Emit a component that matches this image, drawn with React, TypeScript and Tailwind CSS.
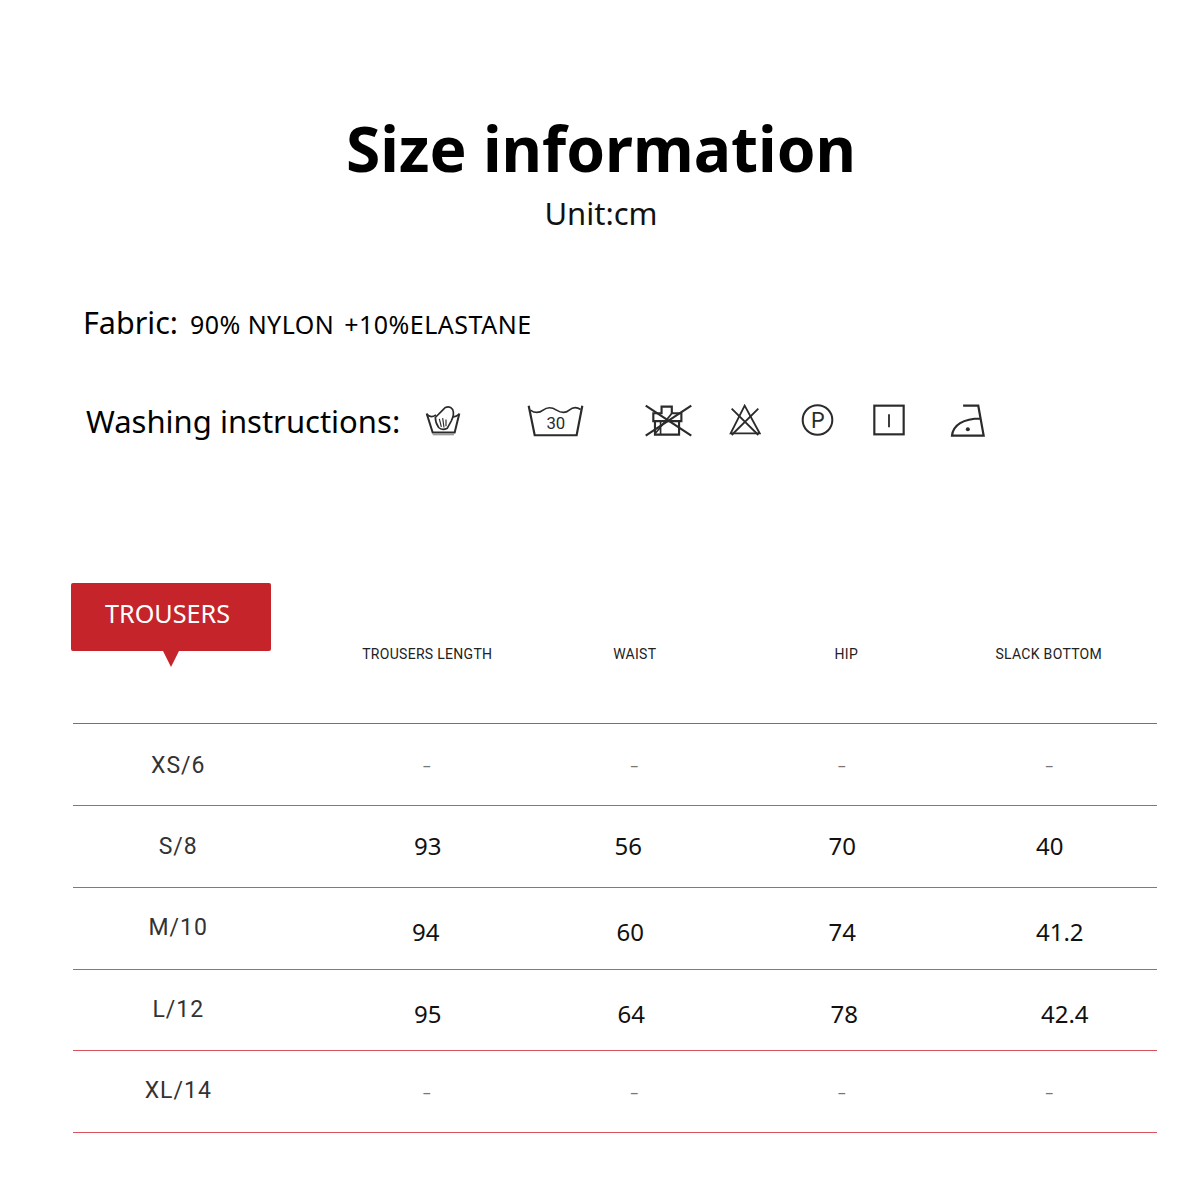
const columns = [
  { label: "TROUSERS LENGTH", className: "" },
  { label: "WAIST", className: "" },
  { label: "HIP", className: "pl-[8px]" },
  { label: "SLACK BOTTOM", className: "pr-[2px]" },
];

const rows = [
  { size: "XS/6", height: "h-[82px]", labelClass: "pt-[4px]", values: null },
  {
    size: "S/8",
    height: "h-[82px]",
    labelClass: "pt-[2px]",
    values: [
      { text: "93", className: "pl-[1px] pb-[2px]" },
      { text: "56", className: "pr-[13px] pb-[2px]" },
      { text: "70", className: "pb-[2px]" },
      { text: "40", className: "pb-[2px]" },
    ],
  },
  {
    size: "M/10",
    height: "h-[82px]",
    labelClass: "",
    values: [
      { text: "94", className: "pr-[3px] pt-[6px]" },
      { text: "60", className: "pr-[9px] pt-[6px]" },
      { text: "74", className: "pt-[6px]" },
      { text: "41.2", className: "pl-[20px] pt-[6px]" },
    ],
  },
  {
    size: "L/12",
    height: "h-[81px]",
    labelClass: "",
    values: [
      { text: "95", className: "pl-[1px] pt-[8px]" },
      { text: "64", className: "pr-[7px] pt-[8px]" },
      { text: "78", className: "pl-[4px] pt-[8px]" },
      { text: "42.4", className: "pl-[30px] pt-[8px]" },
    ],
  },
  { size: "XL/14", height: "h-[82px]", labelClass: "", values: null },
];

const HandWashIcon = () => (
  <svg viewBox="45 42 108 95" className="w-[36px] h-[32px]" fill="none" stroke="#2b2b2b" strokeWidth="5">
    <path d="M50 70 L68 127 H134 L148 70" strokeWidth="6" />
    <path d="M50 72 Q62 85 78 74 M122 78 Q134 84 148 72" />
    <path d="M76 82 L98 60 L106 52 Q120 46 128 58 Q134 72 124 92 L112 114 Q96 122 86 112 Q76 98 76 82Z" fill="#fff" />
    <path d="M88 86 L94 110 M98 84 L102 112 M108 88 L108 108" strokeWidth="3.5" />
    <path d="M68 133 H132" stroke="#9a9a9a" />
  </svg>
);

const Wash30Icon = () => (
  <svg viewBox="352 40 170 98" className="w-[57px] h-[33px]" fill="none" stroke="#2b2b2b" strokeWidth="6.5">
    <path d="M357 45 L375 133 H500 L517 45" />
    <path d="M362 58 Q382 72 400 58 T440 58 T478 58 T512 56" strokeWidth="5" />
    <text x="438" y="114" textAnchor="middle" fill="#2b2b2b" stroke="none" fontSize="50" fontFamily="Roboto, sans-serif">
      30
    </text>
  </svg>
);

const NoTumbleIcon = () => (
  <svg viewBox="702 40 148 100" className="w-[49px] h-[33px]" fill="none" stroke="#2b2b2b" strokeWidth="6.5">
    <path d="M755 48 H786 V68 H815 V92 H730 V68 H755Z" />
    <path d="M735 92 V133 H808 V92" />
    <path d="M707 45 L845 136 M845 45 L707 136" />
    <path d="M735 130 L785 70 M752 92 V133" strokeWidth="5" />
  </svg>
);

const NoBleachIcon = () => (
  <svg viewBox="60 42 96 96" className="w-[32px] h-[32px]" fill="none" stroke="#2b2b2b" strokeWidth="5.5">
    <path d="M107 47 L152 130 H65Z" />
    <path d="M68 56 L148 135 M148 56 L68 135" />
  </svg>
);

const DryCleanIcon = () => (
  <svg viewBox="275 40 98 94" className="w-[33px] h-[32px]" fill="none" stroke="#2b2b2b" strokeWidth="6">
    <circle cx="324" cy="87" r="44" />
    <text x="325" y="110" textAnchor="middle" fill="#2b2b2b" stroke="none" fontSize="64" fontFamily="Roboto, sans-serif">
      P
    </text>
  </svg>
);

const TumbleLowIcon = () => (
  <svg viewBox="488 43 96 94" className="w-[32px] h-[32px]" fill="none" stroke="#2b2b2b" strokeWidth="6.5">
    <rect x="492" y="47" width="88" height="86" />
    <path d="M536 73 V112" strokeWidth="5.5" />
  </svg>
);

const IronIcon = () => (
  <svg viewBox="722 42 105 98" className="w-[36px] h-[33px]" fill="none" stroke="#2b2b2b" strokeWidth="6.5">
    <path d="M760 47 H805 L821 136 H727 C730 105 760 85 812 85" />
    <circle cx="774" cy="117" r="6" fill="#2b2b2b" stroke="none" />
  </svg>
);

export default function App() {
  return (
    <div className="w-[1200px] h-[1187px] bg-white overflow-hidden text-black font-['Noto_Sans',sans-serif]">
      {/* Heading */}
      <header className="pt-[104px] text-center">
        <h1 className="pl-[2px] text-[62.3px] leading-[88px] font-bold">Size information</h1>
        <p className="pt-[1px] pl-[2px] text-[31px] leading-[40px] text-[#111]">Unit:cm</p>
      </header>

      {/* Fabric */}
      <div className="mt-[67px] ml-[83px] flex items-baseline h-[44px]">
        <span className="text-[30.5px] leading-[44px]">Fabric:</span>
        <span className="ml-[12px] text-[25px] leading-[44px] tracking-[0.45px]">90% NYLON</span>
        <span className="ml-[10px] text-[25px] leading-[44px] tracking-[0.5px]">+10%ELASTANE</span>
      </div>

      {/* Washing */}
      <div className="mt-[55px] ml-[86px] flex items-center h-[44px]">
        <span className="text-[31px] leading-[44px] w-[339px]">Washing instructions:</span>
        <span className="flex items-center -mt-[2px]">
          <HandWashIcon />
          <span className="ml-[66px]">
            <Wash30Icon />
          </span>
          <span className="ml-[60px]">
            <NoTumbleIcon />
          </span>
          <span className="ml-[36px]">
            <NoBleachIcon />
          </span>
          <span className="ml-[40px]">
            <DryCleanIcon />
          </span>
          <span className="ml-[39px]">
            <TumbleLowIcon />
          </span>
          <span className="ml-[45px]">
            <IronIcon />
          </span>
        </span>
      </div>

      {/* Table */}
      <section className="mt-[140px] ml-[73px] w-[1084px]">
        <div className="grid grid-cols-[250.5px_repeat(4,207.5px)] h-[141px] border-b border-[#cf4a55]">
          <div className="relative">
            <div className="-ml-[2px] w-[200px] h-[68px] rounded-[2px] bg-[#c5242b] pl-[34px] pt-[10px] text-[25.2px] leading-[40px] text-white">
              TROUSERS
            </div>
            <div className="absolute left-[90px] top-[68px] w-0 h-0 border-x-[8px] border-x-transparent border-t-[16px] border-t-[#c5242b]" />
          </div>
          {columns.map((column) => (
            <div
              key={column.label}
              className={`pt-[60px] text-center text-[14px] leading-[22px] tracking-[0.3px] text-[#222] font-['Roboto',sans-serif] ${column.className}`}
            >
              {column.label}
            </div>
          ))}
        </div>

        {rows.map((row) => (
          <div
            key={row.size}
            className={`grid grid-cols-[250.5px_repeat(4,207.5px)] items-center border-b border-[#d9535e] ${row.height}`}
          >
            <div className={`pr-[40px] text-center text-[23px] tracking-[1px] text-[#333] font-['Roboto',sans-serif] ${row.labelClass}`}>
              {row.size}
            </div>
            {row.values
              ? row.values.map((value) => (
                  <div key={value.text} className={`text-center text-[24px] text-[#111] ${value.className}`}>
                    {value.text}
                  </div>
                ))
              : columns.map((column) => (
                  <div key={column.label} className="pr-[1px] text-center text-[16px] text-[#777]">
                    –
                  </div>
                ))}
          </div>
        ))}
      </section>
    </div>
  );
}
